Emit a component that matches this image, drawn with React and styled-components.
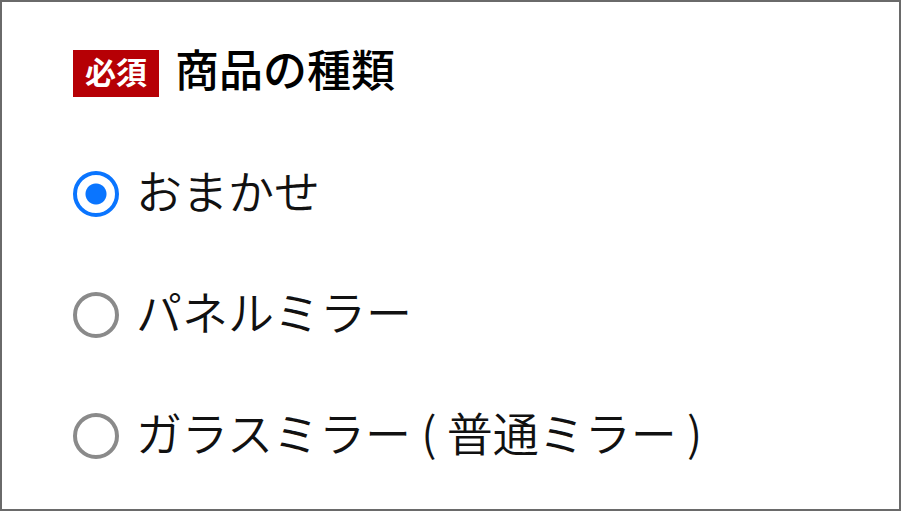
import React from 'react';
import styled, { createGlobalStyle } from 'styled-components';

const GlobalStyle = createGlobalStyle`
  * { box-sizing: border-box; }
  body { margin: 0; background: #fff; }
`;

const Form = styled.form`
  min-height: 100vh;
  padding: 40px 71px 24px;
  border: 2px solid #6a6a6a;
  background: #fff;
  color: #111;
  font-family: "Noto Sans CJK JP", sans-serif;
`;

const Group = styled.fieldset`
  margin: 0;
  padding: 0;
  border: 0;
`;

const Legend = styled.legend`
  display: flex;
  align-items: center;
  gap: 16px;
  padding: 0;
  height: 62px;
`;

const Title = styled.span`
  padding-bottom: 10px;
  color: #000;
  font-size: 44px;
  font-weight: 500;
  line-height: 52px;
`;

const Badge = styled.span`
  padding: 0 12px 6px;
  background: #b60005;
  color: #fff;
  font-size: 31px;
  font-weight: 700;
  line-height: 41px;
  text-align: center;
`;

const Options = styled.div`
  display: flex;
  flex-direction: column;
  gap: 57px;
  padding-top: 58px;
`;

const Option = styled.label`
  display: flex;
  align-items: center;
  gap: 17px;
`;

const OptionText = styled.span`
  padding-bottom: 10px;
  font-size: 46px;
  font-weight: 350;
  line-height: 54px;
`;

const Radio = styled.input`
  appearance: none;
  flex: none;
  width: 46px;
  height: 46px;
  margin: 0;
  border: 4px solid #8a8a8a;
  border-radius: 50%;
  background: #fff;

  &:checked {
    border-color: #0a75ff;
    background: radial-gradient(circle, #0a75ff 10px, #fff 11px);
  }
`;

const choices = [
  { value: 'any', label: 'おまかせ' },
  { value: 'panel', label: 'パネルミラー' },
  { value: 'glass', label: 'ガラスミラー ( 普通ミラー )' },
];

export default function App() {
  return (
    <>
      <GlobalStyle />
      <Form>
        <Group>
          <Legend>
            <Badge>必須</Badge>
            <Title>商品の種類</Title>
          </Legend>
          <Options>
            {choices.map(({ value, label }) => (
              <Option key={value}>
                <Radio type="radio" name="kind" value={value} defaultChecked={value === 'any'} />
                <OptionText>{label}</OptionText>
              </Option>
            ))}
          </Options>
        </Group>
      </Form>
    </>
  );
}
